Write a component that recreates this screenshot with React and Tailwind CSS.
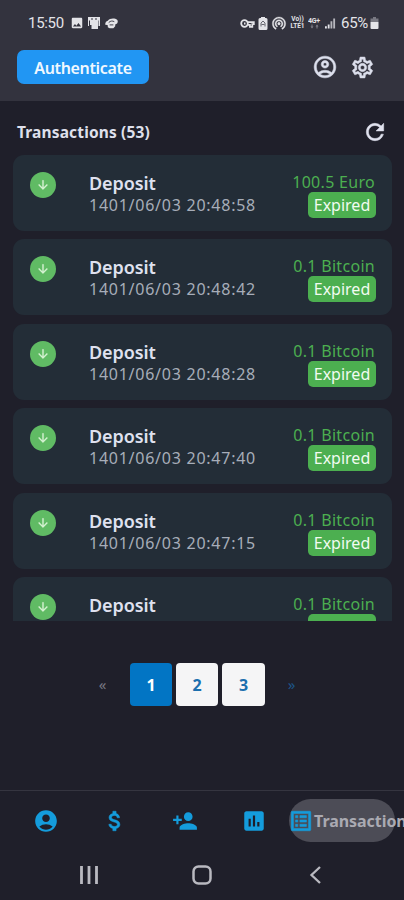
import {
  MdAccountCircle,
  MdArrowDownward,
  MdAssessment,
  MdAttachMoney,
  MdImage,
  MdListAlt,
  MdOutlineAccountCircle,
  MdOutlineSettings,
  MdPersonAdd,
  MdRefresh,
  MdWifiTethering,
} from 'react-icons/md';

const transactions = [
  { date: '1401/06/03 20:48:58', amount: '100.5 Euro' },
  { date: '1401/06/03 20:48:42', amount: '0.1 Bitcoin' },
  { date: '1401/06/03 20:48:28', amount: '0.1 Bitcoin' },
  { date: '1401/06/03 20:47:40', amount: '0.1 Bitcoin' },
  { date: '1401/06/03 20:47:15', amount: '0.1 Bitcoin' },
  { date: '1401/06/03 20:46:52', amount: '0.1 Bitcoin' },
];

// Thickens the material glyphs, leaving their empty bounding path alone
const bold = 'stroke-current [stroke-width:0.5] [&_path[fill=none]]:stroke-none';

const StatusBar = () => (
  <div className="h-[46px] pl-7 pr-[25px] flex items-center justify-between font-['Roboto',sans-serif] text-[#e4e4e8]">
    <div className="flex items-center">
      <span className="w-[36px] text-[15px] tracking-[-0.3px] whitespace-nowrap">15:50</span>
      <MdImage className="ml-1.5 w-[14px] h-[14px]" />
      <svg viewBox="0 0 14 14" className="ml-[3px] w-[14px] h-[14px]" fill="currentColor">
        <path d="M1 1h12v9h-1.500V4.500H11V9v4H4.500V9L3 9V4.500H2V10H1z" />
        <path d="M4 3h2M8 3h2" stroke="#33333e" fill="none" />
      </svg>
      <svg viewBox="0 0 14 14" className="ml-[4px] w-[13px] h-[13px]" fill="currentColor">
        <path d="M3 4c2-3 8-3 10-1 1 1 1 3 0 4l-2 1v2L9 12H5l-2-1V9L0 8l1-3z" />
        <path d="M4 6c2-2 4-2 6-1M5 8.500h4" stroke="#33333e" fill="none" />
      </svg>
    </div>
    <div className="flex items-center">
      <svg viewBox="0 0 15 9" className="w-[15px] h-[9px]" fill="none" stroke="currentColor" strokeWidth="1.800">
        <circle cx="4.500" cy="4.500" r="3.300" />
        <path d="M4 4.500h1.500M7.500 3.200h6.300v2h-1.500v2.600h-2.400V5.800H8" />
      </svg>
      <svg viewBox="0 0 10 13" className="ml-[3px] w-[10px] h-[13px]" fill="currentColor">
        <path d="M3 0h4v1h1a1.500 1.500 0 0 1 1.500 1.500v9A1.500 1.500 0 0 1 8 13H2a1.500 1.500 0 0 1-1.500-1.500v-9A1.500 1.500 0 0 1 2 1h1z" />
        <path d="M3 9.500V6l2-2 2 2v3.500M3.500 7.500h3" stroke="#66666f" fill="none" />
      </svg>
      <MdWifiTethering className={`ml-[3px] w-[16px] h-[16px] ${bold}`} />
      <div className="ml-[3px] w-[15px] flex flex-col items-center text-[6.500px] leading-[7px] font-bold">
        <span>Vo))</span>
        <span>LTE1</span>
      </div>
      <svg viewBox="0 0 13 12" className="ml-[3px] w-[13px] h-[12px]" fill="currentColor">
        <text x="0" y="6" fontSize="7" fontWeight="700" textLength="12">4G+</text>
        <path d="M3.500 7.500h1v2h1L4 11.500 2.500 9.500h1zM8.500 11.500h1v-2h1L9 7.500 7.500 9.500h1z" opacity=".45" />
      </svg>
      <svg viewBox="0 0 12 12" className="ml-[4px] w-[11px] h-[12px]" fill="currentColor">
        <path d="M0 9.500h2V12H0zM3 7.500h2V12H3z" />
        <path d="M6 4h2v8H6zM9 1h2v11H9z" opacity=".75" />
      </svg>
      <span className="ml-[5px] w-[29px] text-[15px] tracking-[-0.3px] whitespace-nowrap">65%</span>
      <svg viewBox="0 0 8 12" className="w-[9px] h-[12px]" fill="currentColor">
        <path d="M2.500 0h3v1.500H8V5H0V1.500h2.500z" opacity=".4" />
        <path d="M0 5h8v6a1 1 0 0 1-1 1H1a1 1 0 0 1-1-1z" />
      </svg>
    </div>
  </div>
);

const Header = () => (
  <header className="h-[101px] bg-[#33333e]">
    <StatusBar />
    <div className="pt-1 pl-[17px] pr-[29px] flex items-center justify-between">
      <button className="w-[132px] h-[34px] pt-0.5 rounded-[7px] bg-[#2196f3] text-[#f0f8ff] text-[16px] font-semibold tracking-[-0.35px] whitespace-nowrap">
        Authenticate
      </button>
      <div className="flex items-center gap-[12px] text-[#dcdfec]">
        <MdOutlineAccountCircle className={`w-[26px] h-[26px] ${bold}`} />
        <MdOutlineSettings className={`w-[25px] h-[25px] ${bold}`} />
      </div>
    </div>
  </header>
);

const TransactionCard = ({ transaction }) => (
  <div className="h-[76px] shrink-0 rounded-[11px] bg-[#232d37] pl-[17px] pr-4 flex">
    <div className="mt-[17px] w-[26px] h-[26px] shrink-0 rounded-full bg-[#60bb64] flex items-center justify-center">
      <MdArrowDownward className={`w-[14px] h-[14px] text-[#d8f3d5] ${bold}`} />
    </div>
    <div className="ml-[33px] pt-[17px] flex-1 whitespace-nowrap">
      <div className="text-[18px] leading-[22px] font-semibold tracking-[-0.1px] text-[#dfe1ef]">Deposit</div>
      <div className="text-[16px] leading-[23px] tracking-[0.75px] text-[#a7adb9]">{transaction.date}</div>
    </div>
    <div className="pt-[16px] flex flex-col items-end whitespace-nowrap">
      <div className="h-[21px] mr-[1px] text-[16px] leading-[23px] tracking-[0.3px] text-[#4caf50]">{transaction.amount}</div>
      <div className="w-[68px] h-[26px] rounded-[5px] bg-[#4caf50] text-center text-[16px] leading-[27px] text-[#f1fbf0]">
        Expired
      </div>
    </div>
  </div>
);

const Pagination = () => (
  <div className="mt-[42px] h-[43px] flex justify-center gap-[4px] pr-[13px] text-[16px] font-bold text-[#1b6fae]">
    <button className="w-[43px] pl-1 text-[#777782] font-normal text-[15px]">«</button>
    <button className="w-[42px] ml-1 rounded-[4px] bg-[#0275c4] text-white">1</button>
    <button className="w-[42px] rounded-[4px] bg-[#f5f5f6]">2</button>
    <button className="w-[43px] rounded-[4px] bg-[#f5f5f6]">3</button>
    <button className="w-[43px] pl-0.5 text-[#1d5488] font-normal text-[15px]">»</button>
  </div>
);

const BottomNav = () => (
  <nav className="h-[60px] border-t border-[#353540] flex items-center overflow-hidden text-[#149cdc]">
    <div className="w-[11px] shrink-0" />
    <div className="w-[69px] shrink-0 flex justify-center">
      <MdAccountCircle className="w-[26px] h-[26px]" />
    </div>
    <div className="w-[69px] shrink-0 flex justify-center">
      <MdAttachMoney className={`w-[26px] h-[26px] ${bold}`} />
    </div>
    <div className="w-[71px] shrink-0 flex justify-center">
      <MdPersonAdd className="w-[26px] h-[26px]" />
    </div>
    <div className="w-[68px] shrink-0 flex justify-center">
      <MdAssessment className="w-[26px] h-[26px]" />
    </div>
    <div className="ml-[1px] w-[106px] h-[43px] shrink-0 rounded-full bg-[#4c4c56] flex items-center whitespace-nowrap">
      <MdListAlt className={`w-[26px] h-[26px] -ml-px shrink-0 ${bold}`} />
      <span className="text-[16px] font-bold tracking-[-0.05px] text-[#aaaab2]">Transactions</span>
    </div>
  </nav>
);

const SystemBar = () => (
  <div className="h-[50px] flex items-center pl-[79px] text-[#b9b9c0]">
    <svg viewBox="0 0 20 20" className="w-[20px] h-[20px]" fill="none" stroke="currentColor" strokeWidth="2.800">
      <path d="M2.500 1v18M10 1v18M17.500 1v18" />
    </svg>
    <svg viewBox="0 0 20 20" className="w-[20px] h-[20px] ml-[93px]" fill="none" stroke="currentColor" strokeWidth="2.500">
      <rect x="1.500" y="1.500" width="17" height="17" rx="5" />
    </svg>
    <svg viewBox="0 0 13 20" className="w-[13px] h-[20px] ml-[97px]" fill="none" stroke="currentColor" strokeWidth="2.300">
      <path d="M11 2L2.500 10L11 18" />
    </svg>
  </div>
);

export default function App() {
  return (
    <div className="w-[404px] h-[900px] overflow-hidden bg-[#1f1f2a] flex flex-col font-['Noto_Sans',sans-serif]">
      <Header />
      <main className="flex-1 min-h-0">
        <div className="h-[54px] pt-[7px] pl-[17px] pr-[16px] flex items-center justify-between">
          <h1 className="pt-0.5 text-[15.500px] font-bold tracking-[0.15px] text-[#dfe0ec] whitespace-nowrap">Transactions (53)</h1>
          <MdRefresh className={`w-[26px] h-[26px] text-[#e0e2ee] ${bold}`} />
        </div>

        <div className="h-[466px] ml-[13px] mr-3 overflow-hidden flex flex-col gap-[8.4px]">
          {transactions.map((transaction) => (
            <TransactionCard key={transaction.date} transaction={transaction} />
          ))}
        </div>

        <Pagination />
      </main>
      <BottomNav />
      <SystemBar />
    </div>
  );
}
